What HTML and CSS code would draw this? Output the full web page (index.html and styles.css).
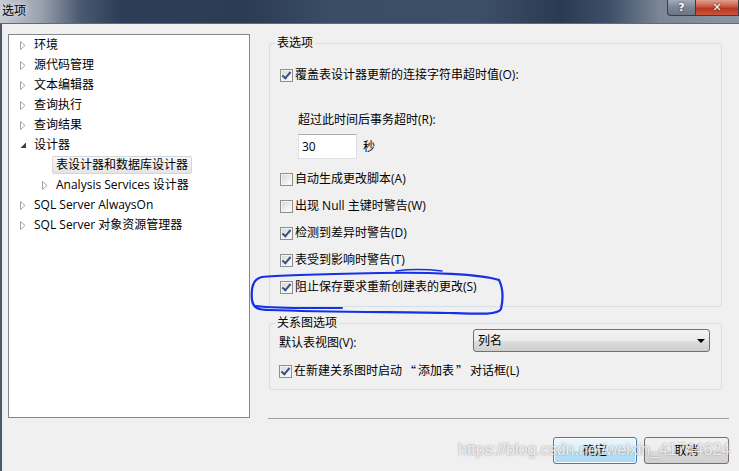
FILE: index.html
```html
<!DOCTYPE html>
<html lang="zh-CN">
<head>
    <meta charset="UTF-8">
    <title>选项</title>
    <link rel="stylesheet" href="styles.css">
</head>
<body>
    <div class="titlebar">
        <span class="title">选项</span>
        <div class="caption-buttons">
            <span class="cap-help">?</span>
            <span class="cap-close">✕</span>
        </div>
    </div>

    <div class="main">
        <!-- left navigation tree -->
        <ul class="tree">
            <li class="node"><span class="arrow"><svg width="6" height="9" viewBox="0 0 6 9"><path d="M0.5 0.5 L5 4.5 L0.5 8.5 Z" fill="none" stroke="#a5a5a5"/></svg></span><span class="label">环境</span></li>
            <li class="node"><span class="arrow"><svg width="6" height="9" viewBox="0 0 6 9"><path d="M0.5 0.5 L5 4.5 L0.5 8.5 Z" fill="none" stroke="#a5a5a5"/></svg></span><span class="label">源代码管理</span></li>
            <li class="node"><span class="arrow"><svg width="6" height="9" viewBox="0 0 6 9"><path d="M0.5 0.5 L5 4.5 L0.5 8.5 Z" fill="none" stroke="#a5a5a5"/></svg></span><span class="label">文本编辑器</span></li>
            <li class="node"><span class="arrow"><svg width="6" height="9" viewBox="0 0 6 9"><path d="M0.5 0.5 L5 4.5 L0.5 8.5 Z" fill="none" stroke="#a5a5a5"/></svg></span><span class="label">查询执行</span></li>
            <li class="node"><span class="arrow"><svg width="6" height="9" viewBox="0 0 6 9"><path d="M0.5 0.5 L5 4.5 L0.5 8.5 Z" fill="none" stroke="#a5a5a5"/></svg></span><span class="label">查询结果</span></li>
            <li class="node"><span class="arrow"><svg width="6" height="9" viewBox="0 0 6 9"><path d="M6 1.5 L6 7 L0.5 7 Z" fill="#3c3c3c"/></svg></span><span class="label">设计器</span></li>
            <li class="node child"><span class="arrow"></span><span class="label selected">表设计器和数据库设计器</span></li>
            <li class="node child"><span class="arrow"><svg width="6" height="9" viewBox="0 0 6 9"><path d="M0.5 0.5 L5 4.5 L0.5 8.5 Z" fill="none" stroke="#a5a5a5"/></svg></span><span class="label">Analysis Services 设计器</span></li>
            <li class="node"><span class="arrow"><svg width="6" height="9" viewBox="0 0 6 9"><path d="M0.5 0.5 L5 4.5 L0.5 8.5 Z" fill="none" stroke="#a5a5a5"/></svg></span><span class="label">SQL Server AlwaysOn</span></li>
            <li class="node"><span class="arrow"><svg width="6" height="9" viewBox="0 0 6 9"><path d="M0.5 0.5 L5 4.5 L0.5 8.5 Z" fill="none" stroke="#a5a5a5"/></svg></span><span class="label">SQL Server 对象资源管理器</span></li>
        </ul>

        <div class="options">
            <fieldset class="group table-group">
                <legend>表选项</legend>
                <div class="check-row"><span class="cb checked"></span>覆盖表设计器更新的连接字符串超时值(O):</div>
                <div class="timeout">
                    <div class="timeout-label">超过此时间后事务超时(R):</div>
                    <div class="timeout-input">
                        <span class="textbox">30</span>
                        <span>秒</span>
                    </div>
                </div>
                <div class="check-list">
                    <div class="check-row"><span class="cb"></span>自动生成更改脚本(A)</div>
                    <div class="check-row"><span class="cb"></span>出现 Null 主键时警告(W)</div>
                    <div class="check-row"><span class="cb checked"></span>检测到差异时警告(D)</div>
                    <div class="check-row"><span class="cb checked"></span>表受到影响时警告(T)</div>
                    <div class="check-row"><span class="cb checked"></span>阻止保存要求重新创建表的更改(S)</div>
                </div>
            </fieldset>

            <fieldset class="group diagram-group">
                <legend>关系图选项</legend>
                <div class="view-row">
                    <span class="view-label">默认表视图(V):</span>
                    <span class="combo">列名<svg width="8" height="4" viewBox="0 0 8 4"><path d="M0 0 H8 L4 4 Z" fill="#000"/></svg></span>
                </div>
                <div class="check-row"><span class="cb checked"></span>在新建关系图时启动<span class="cjk-quote">“</span>添加表<span class="cjk-quote">”</span>对话框(L)</div>
            </fieldset>

            <div class="separator"></div>

            <div class="buttons">
                <button class="btn default">确定</button>
                <button class="btn">取消</button>
            </div>
        </div>
    </div>

    <div class="watermark">https://blog.csdn.net/weixin_41744624</div>

    <!-- hand drawn marker round the last option -->
    <svg class="annotation" width="739" height="471" viewBox="0 0 739 471">
        <path d="M499 280 C480 274 430 272 380 273 C330 274 280 275 262 277 C252 279 251 290 252 300 C253 308 258 310 270 310 C320 312 400 312 450 313 C480 314 498 315 501 309 C503 300 503 288 499 280" fill="none" stroke="#1530e6" stroke-width="2.2" stroke-linecap="round"/>
        <path d="M256 306 C280 309 310 308 342 308" fill="none" stroke="#1530e6" stroke-width="2" stroke-linecap="round"/>
        <path d="M396 271 C410 269 425 269 442 271" fill="none" stroke="#1530e6" stroke-width="1.6" stroke-linecap="round"/>
    </svg>
</body>
</html>
```

FILE: styles.css
```css
body {
    margin: 0;
    width: 739px;
    height: 471px;
    overflow: hidden;
    position: relative;
    background: #f0f0f0;
    font-family: "Open Sans", "Noto Sans CJK SC", sans-serif;
    font-size: 12px;
    line-height: 16px;
    color: #000;
}

/* title bar */
.titlebar {
    display: flex;
    height: 23px;
    border-bottom: 1px solid #5e6b7c;
    background: linear-gradient(90deg, #c6cbd2 0, #9aa3af 40px, #4a5a70 80px, #2c3d55 120px, #2b3c53 250px, #3b4d65 330px, #3d4f67 480px, #2a3a51 560px, #3e4f67 610px, #7b8696 660px, #8a94a2 739px);
}
.title {
    padding: 3px 0 0 2px;
    text-shadow: 0 0 6px #fff;
}
.caption-buttons {
    display: flex;
    margin-left: auto;
    height: 16px;
}
.cap-help, .cap-close {
    display: flex;
    align-items: center;
    justify-content: center;
    box-sizing: border-box;
    height: 16px;
    color: #fff;
    font-family: "DejaVu Sans", sans-serif;
    font-weight: bold;
    text-shadow: 0 0 2px #222;
    border: 1px solid #333d4b;
    border-top: none;
}
.cap-help {
    width: 29px;
    font-size: 11px;
    border-radius: 0 0 0 4px;
    background: linear-gradient(#a2abb7, #7b8595 50%, #6b7686);
}
.cap-close {
    width: 43px;
    font-size: 11px;
    border-left: none;
    background: linear-gradient(#e0a08f, #c8563f 45%, #b8361f 55%, #c9553b);
}

.main {
    display: flex;
    align-items: flex-start;
    height: 447px;
    box-sizing: border-box;
    padding: 10px 0 0 6px;
    border-left: 2px solid #4b596b;
}

/* tree */
.tree {
    list-style: none;
    margin: 0;
    padding: 0;
    width: 242px;
    height: 384px;
    box-sizing: border-box;
    flex-shrink: 0;
    border: 1px solid #828790;
    background: #fff;
}
.node {
    display: flex;
    align-items: center;
    height: 20px;
    padding-left: 11px;
    white-space: nowrap;
}
.node.child {
    padding-left: 33px;
}
.arrow {
    display: flex;
    width: 14px;
    height: 9px;
}
.label.selected {
    margin-left: -4px;
    padding: 0 3px;
    height: 16px;
    border: 1px solid #d6d6d6;
    border-radius: 2px;
    background: linear-gradient(#f9f9f9, #e4e4e4);
}

/* options */
.options {
    display: flex;
    flex-direction: column;
    width: 460px;
    margin-left: 19px;
}
.group {
    min-width: 0;
    margin: 0 7px 0 0;
    border: 1px solid #d5dfe5;
    border-radius: 3px;
}
.group legend {
    padding: 0 2px;
    line-height: 16px;
}
.table-group {
    margin-top: 1px;
    padding: 14px 0 9px 10px;
}
.table-group legend {
    margin-left: -5px;
}
.check-row {
    display: flex;
    align-items: center;
    gap: 2px;
    height: 20px;
    white-space: nowrap;
}
.cjk-quote {
    font-family: "Noto Sans CJK SC", sans-serif;
    display: inline-block;
    width: 12px;
    text-align: center;
}
.cb {
    position: relative;
    width: 13px;
    height: 13px;
    box-sizing: border-box;
    border: 1px solid #8e8f8f;
    background: linear-gradient(135deg, #d4d4d4, #f4f4f4 70%, #fff);
    box-shadow: inset 0 0 0 1px #f4f4f4;
}
.cb.checked::after {
    content: "";
    position: absolute;
    left: 3px;
    top: 0;
    width: 3px;
    height: 7px;
    border: solid #3e4f85;
    border-width: 0 2px 2px 0;
    transform: rotate(40deg);
}
.timeout {
    margin: 27px 0 0 18px;
}
.timeout-input {
    display: flex;
    align-items: center;
    gap: 6px;
    margin-top: 6px;
}
.textbox {
    width: 59px;
    height: 25px;
    box-sizing: border-box;
    padding: 4px 3px;
    background: #fff;
    border: 1px solid #dde1e6;
    border-top-color: #abadb3;
}
.check-list {
    display: flex;
    flex-direction: column;
    gap: 7px;
    margin-top: 10px;
}

.diagram-group {
    margin-top: 8px;
    padding: 0 11px 8px 9px;
}
.diagram-group legend {
    margin-left: -4px;
}
.view-row {
    display: flex;
    align-items: center;
    margin-top: -2px;
}
.view-label {
    padding-top: 4px;
}
.combo {
    display: flex;
    align-items: center;
    justify-content: space-between;
    width: 237px;
    height: 23px;
    box-sizing: border-box;
    margin-left: auto;
    padding: 0 4px 0 4px;
    border: 1px solid #707070;
    border-radius: 3px;
    background: linear-gradient(#f2f2f2, #ebebeb 50%, #dddddd 51%, #cfcfcf);
}
.diagram-group .check-row {
    margin-top: 9px;
}

.separator {
    height: 1px;
    margin: 28px 0 0 -1px;
    background: #a0a0a0;
}

.buttons {
    display: flex;
    justify-content: flex-end;
    gap: 7px;
    margin-top: 18px;
}
.btn {
    width: 85px;
    height: 27px;
    padding: 0;
    font: inherit;
    color: #000;
    border: 1px solid #707070;
    border-radius: 3px;
    background: linear-gradient(#f2f2f2, #ebebeb 50%, #dddddd 51%, #cfcfcf);
}
.btn.default {
    width: 84px;
    border-color: #3c7fb1;
    background: linear-gradient(#eaf6fd, #d9f0fc 50%, #bee6fd 51%, #a7d9f5);
    box-shadow: inset 0 0 0 1px #fff;
}

.watermark {
    position: absolute;
    left: 458px;
    top: 441px;
    font-family: "Liberation Sans", Arial, sans-serif;
    font-size: 16px;
    line-height: 18px;
    color: rgba(255, 255, 255, 0.8);
    text-shadow: 0 0 2px rgba(90, 90, 90, 0.7);
    white-space: nowrap;
}

.annotation {
    position: absolute;
    left: 0;
    top: 0;
    pointer-events: none;
}
```
